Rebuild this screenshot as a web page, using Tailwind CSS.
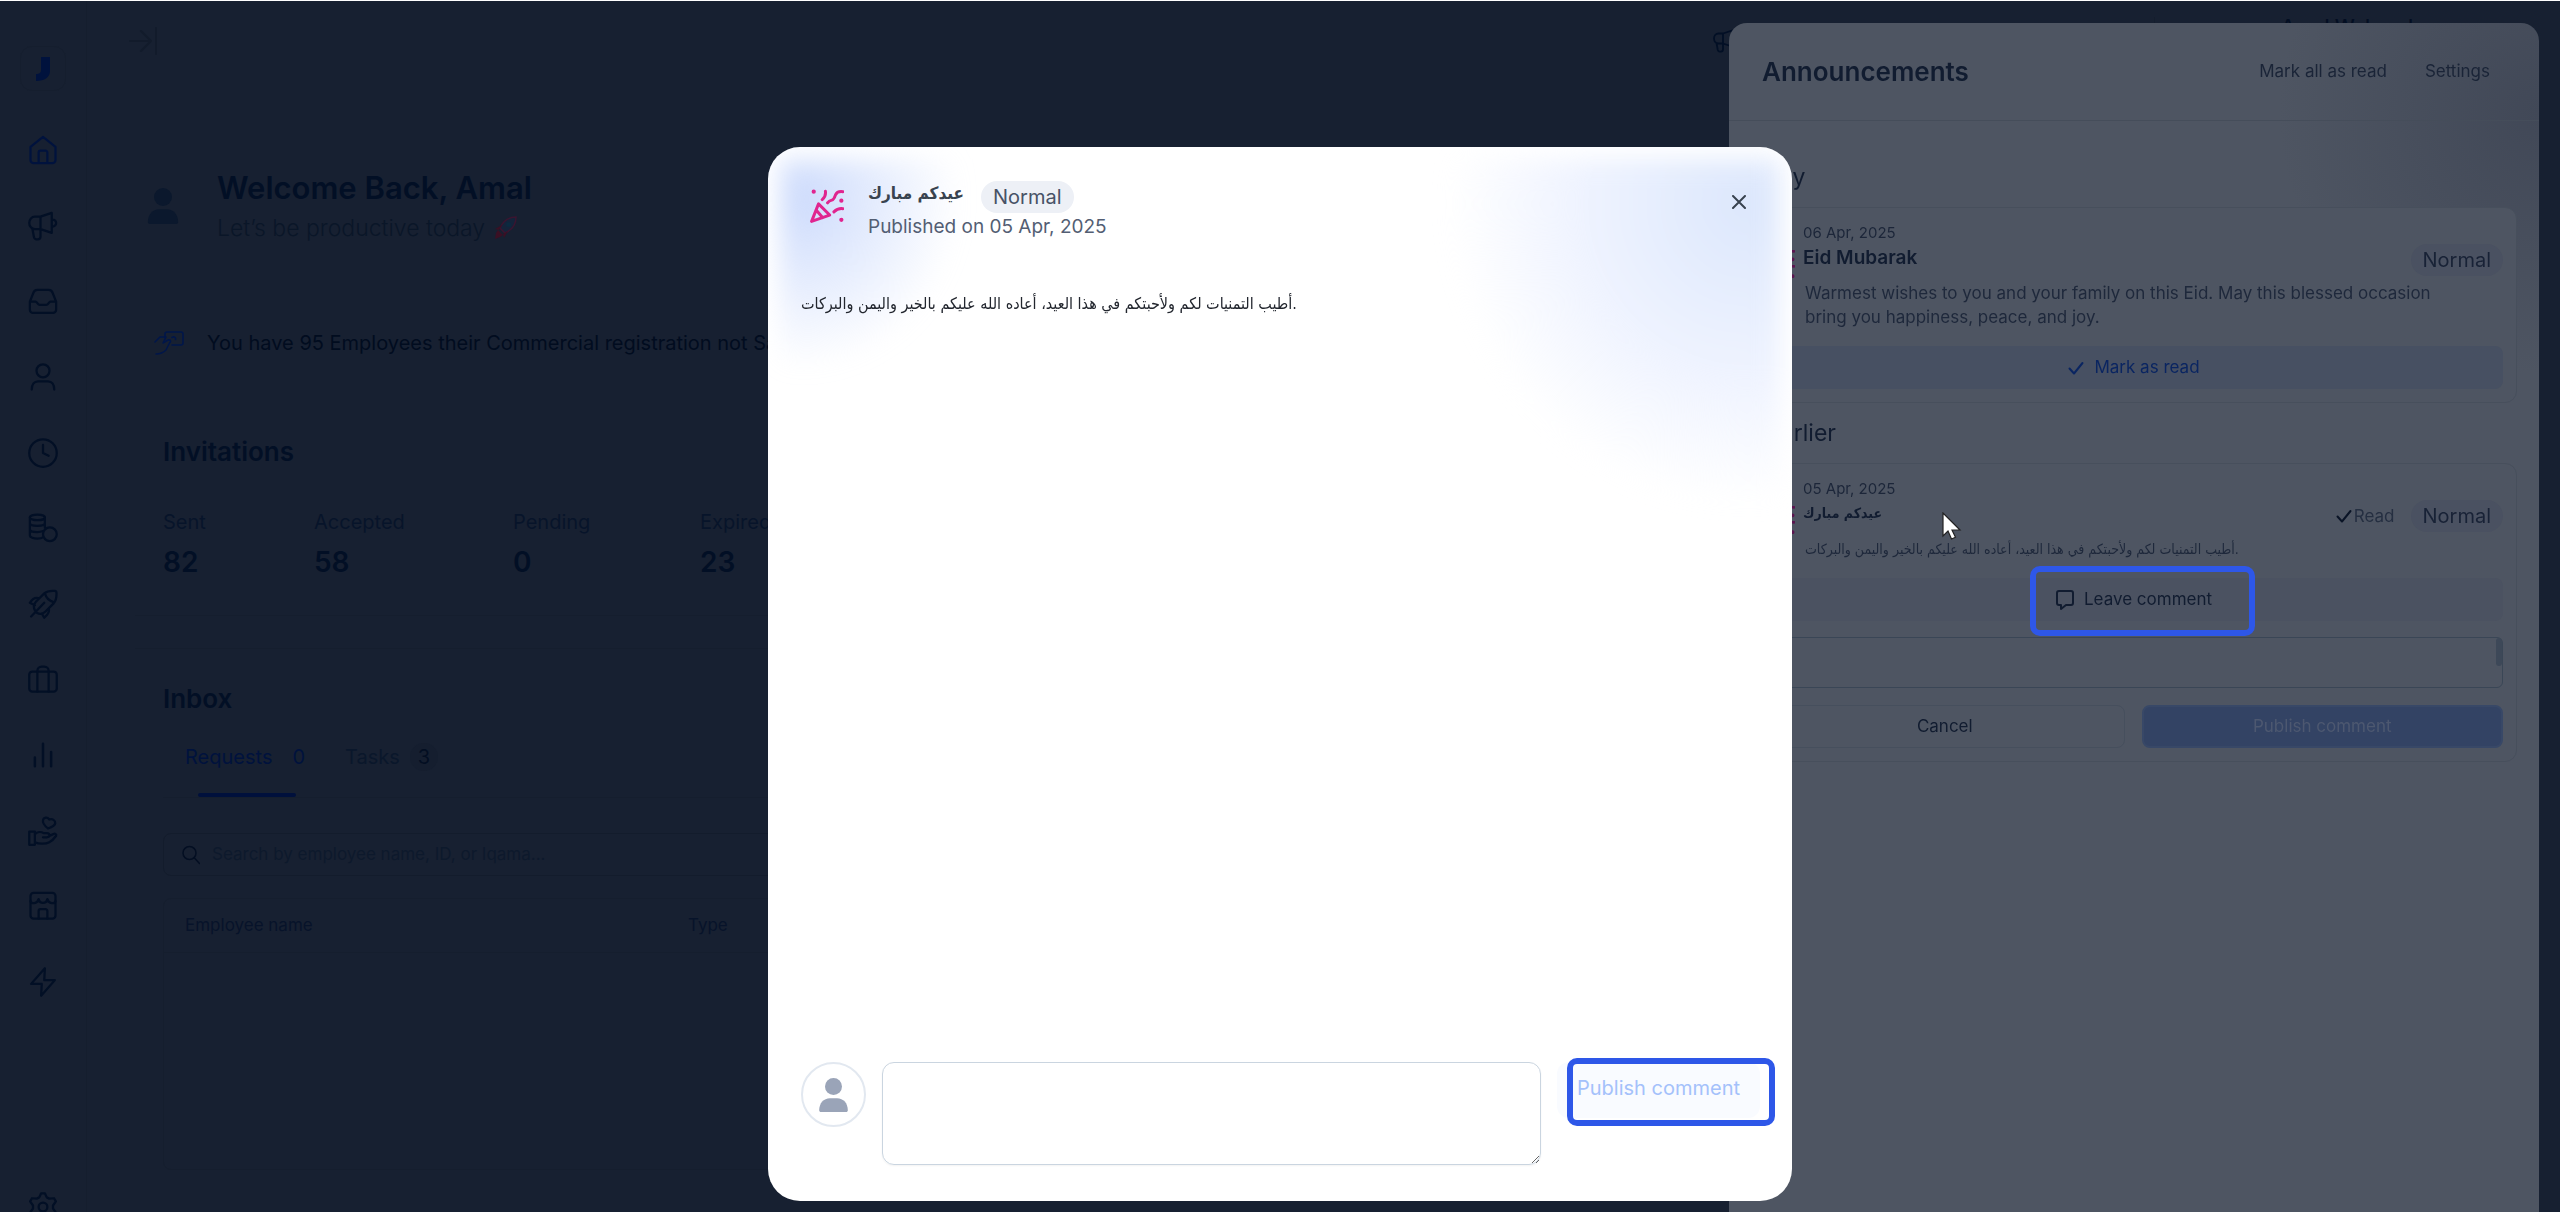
<!DOCTYPE html>
<html lang="en">
  <head>
    <meta charset="UTF-8" />
    <meta name="viewport" content="width=device-width, initial-scale=1.0" />
    <title>Announcements</title>
    <script src="https://cdn.jsdelivr.net/npm/@tailwindcss/browser@4"></script>
  </head>
  <body
    class="flex h-screen overflow-hidden border-t border-white bg-[#172031] font-['Inter','DejaVu_Sans',sans-serif] text-[#030e22]"
  >
    <!-- Shared icons -->
    <svg class="hidden">
      <symbol id="party" viewBox="0 0 32 32" fill="none" stroke="currentColor" stroke-width="2.8" stroke-linecap="round" stroke-linejoin="round">
        <path d="M8 14 1.5 30.5 18.500 24.500ZM6 20l6 7" />
        <path d="M14.500 2c.5 3.500-.5 6-3 8M31 2.500c-4-.5-6 .5-7 3-.8 2.500-1.500 4.500-3.500 5-2 .4-3 1-4 2.500M31 18.500c-3.500-.5-6 .5-8.500 3" />
        <path d="M3.500 2.500h.01M29.500 11h.01M29.500 29h.01" stroke-width="4" />
      </symbol>
      <symbol id="person" viewBox="0 0 32 38" fill="currentColor">
        <circle cx="16" cy="9.500" r="9.500" />
        <path d="M0 36c0-8 5-13.500 12-13.500h8c7 0 12 5.500 12 13.500 0 1.200-.8 2-2 2H2c-1.200 0-2-.8-2-2Z" />
      </symbol>
      <symbol id="megaphone" viewBox="0 0 24 24" fill="none" stroke="currentColor" stroke-width="1.800" stroke-linecap="round" stroke-linejoin="round">
        <path d="M10 4.500H5.500a4.500 5 0 0 0 0 10H10ZM10 4.500 19 1.500v16L10 14.500M19 6.500c2 .5 3.500 1.500 3.500 3s-1.500 2.700-3.500 3.200M3.500 14.200 4.800 21c.3 1 1 1.600 2 1.600h1c1.300 0 2.200-.8 2.200-2v-6" />
      </symbol>
      <symbol id="check" viewBox="0 0 16 16" fill="none" stroke="currentColor" stroke-width="2" stroke-linecap="round" stroke-linejoin="round">
        <path d="m1.500 8.500 4.500 5L14.500 3" />
      </symbol>
    </svg>

    <!-- Sidebar -->
    <aside class="flex w-[87px] shrink-0 flex-col items-center overflow-hidden border-r border-[#151e2e] pt-[45px]">
      <div class="flex h-[45px] w-[46px] shrink-0 items-center justify-center rounded-xl border border-[#151e2e]">
        <svg class="h-6 w-4" viewBox="0 0 16 24" fill="#00123d"><path d="M6 0h9v14c0 6-5 10-14 10v-7c3 0 5-1 5-4Z" /></svg>
      </div>
      <nav class="mt-[37px] flex h-[876px] shrink-0 flex-col justify-between text-[#020f25]">
        <a href="#" aria-label="Home" class="flex size-11 items-center justify-center text-[#00123d]">
          <svg class="size-[30px]" viewBox="0 0 24 24" fill="none" stroke="currentColor" stroke-width="1.800" stroke-linecap="round" stroke-linejoin="round"><path d="M2 9.500 12 1.500l10 8V20a2.500 2.500 0 0 1-2.500 2.500h-15A2.500 2.500 0 0 1 2 20ZM8.500 22.500V14A1.500 1.500 0 0 1 10 12.500h4a1.500 1.500 0 0 1 1.500 1.500v8.500" /></svg>
        </a>
        <a href="#" aria-label="Announcements" class="flex size-11 items-center justify-center">
          <svg class="size-[30px]"><use href="#megaphone" /></svg>
        </a>
        <a href="#" aria-label="Inbox" class="flex size-11 items-center justify-center">
          <svg class="size-[30px]" viewBox="0 0 24 24" fill="none" stroke="currentColor" stroke-width="1.800" stroke-linecap="round" stroke-linejoin="round"><path d="M1.500 12.500 4.500 5c.5-1.300 1.500-2 3-2h9c1.500 0 2.500.7 3 2l3 7.500V19a2.500 2.500 0 0 1-2.500 2.500H4A2.500 2.500 0 0 1 1.500 19ZM1.500 12.500H6c1.500 0 1.500 2.500 3.500 2.500h5c2 0 2-2.500 3.500-2.500h4.500" /></svg>
        </a>
        <a href="#" aria-label="Employees" class="flex size-11 items-center justify-center">
          <svg class="size-[30px]" viewBox="0 0 24 24" fill="none" stroke="currentColor" stroke-width="1.800" stroke-linecap="round" stroke-linejoin="round"><circle cx="12" cy="7" r="5.200" /><path d="M3 22c0-4 2-6.500 5-6.500h8c3 0 5 2.500 5 6.500" /></svg>
        </a>
        <a href="#" aria-label="Attendance" class="flex size-11 items-center justify-center">
          <svg class="size-[30px]" viewBox="0 0 24 24" fill="none" stroke="currentColor" stroke-width="1.800" stroke-linecap="round" stroke-linejoin="round"><circle cx="12" cy="12" r="11" /><path d="M12 5.500V12l4.500 2.200" /></svg>
        </a>
        <a href="#" aria-label="Payroll" class="flex size-11 items-center justify-center">
          <svg class="size-[30px]" viewBox="0 0 24 24" fill="none" stroke="currentColor" stroke-width="1.800" stroke-linecap="round" stroke-linejoin="round"><ellipse cx="7.500" cy="3.500" rx="6" ry="2.200" /><path d="M1.500 3.500v14.500c0 1.500 3 2.500 6 2.500 2 0 3.500-.3 4.500-1M13.500 3.500v8M1.500 8c0 1.500 3 2.200 6 2.200s6-.7 6-2.200M1.500 13c0 1.500 3 2.200 6 2.200 1.500 0 3-.2 4-.6" /><circle cx="17.500" cy="17" r="5.500" /></svg>
        </a>
        <a href="#" aria-label="Onboarding" class="flex size-11 items-center justify-center">
          <svg class="size-[30px]" viewBox="0 0 24 24" fill="none" stroke="currentColor" stroke-width="1.800" stroke-linecap="round" stroke-linejoin="round"><path d="M5.500 17c-1.500-3-1-5 1-7l6.500-6.500c2.500-2 5.500-2.300 8.500-2 1 .1 1.300.8 1.300 1.700.1 3-.3 6-2.300 8.300L14 18c-2 2-4.500 2.500-7 1M13.500 3.500c1 3.500 3.500 6 7 7M13 11 2.500 22M9 7.500C6.500 6.500 3.500 8 1.500 11l4 2M16.500 15.500c1 2.500-.5 5-3.500 7.500l-2-3.500" /></svg>
        </a>
        <a href="#" aria-label="Jobs" class="flex size-11 items-center justify-center">
          <svg class="size-[30px]" viewBox="0 0 24 24" fill="none" stroke="currentColor" stroke-width="1.800" stroke-linecap="round" stroke-linejoin="round"><rect x="1" y="6" width="22" height="16" rx="2.500" /><path d="M7.500 22V5.500A3.500 3.500 0 0 1 11 2h2a3.500 3.500 0 0 1 3.500 3.500V22" /></svg>
        </a>
        <a href="#" aria-label="Reports" class="flex size-11 items-center justify-center">
          <svg class="size-[30px]" viewBox="0 0 24 24" fill="none" stroke="currentColor" stroke-width="2" stroke-linecap="round"><path d="M5.500 14v7M12 3v18M18.500 9.500V21" /></svg>
        </a>
        <a href="#" aria-label="Benefits" class="flex size-11 items-center justify-center">
          <svg class="size-[30px]" viewBox="0 0 24 24" fill="none" stroke="currentColor" stroke-width="1.800" stroke-linecap="round" stroke-linejoin="round"><path d="M1 12.500h4.500V23H1ZM5.500 14.500c2-2 5-2 7-.8h2.500c3 .3 3 3.300 0 3.300h-3M5.500 21c3 1.500 9 1.500 11.500 0 2-1 4-3 5.500-5.200.5-1.500-1-2-2.300-1.300L17 16M16 10c-3-2.500-4.500-4.500-4-6.500.5-2.500 3.500-3 5-.7 2.500-1 5 .7 4.800 3C21.500 8 19 9 16 10Z" /></svg>
        </a>
        <a href="#" aria-label="Marketplace" class="flex size-11 items-center justify-center">
          <svg class="size-[30px]" viewBox="0 0 24 24" fill="none" stroke="currentColor" stroke-width="1.800" stroke-linecap="round" stroke-linejoin="round"><rect x="2" y="1.500" width="20" height="20.500" rx="2.500" /><path d="M2 8c.5 2.500 5.500 2.500 6.500-1.500 1 4 6 4 7 0 1 4 6 4 6.500 1.500M8.500 22v-6a1.500 1.500 0 0 1 1.500-1.500h4a1.500 1.500 0 0 1 1.500 1.500v6" /></svg>
        </a>
        <a href="#" aria-label="Automations" class="flex size-11 items-center justify-center">
          <svg class="size-[30px]" viewBox="0 0 24 24" fill="none" stroke="currentColor" stroke-width="1.800" stroke-linecap="round" stroke-linejoin="round"><path d="M13.500 1 2.500 13.500H11L10.500 23l11-12.500H13Z" /></svg>
        </a>
      </nav>
      <a href="#" aria-label="Settings" class="mt-[188px] shrink-0 text-[#020f25]">
        <svg class="size-[30px]" viewBox="0 0 24 24" fill="none" stroke="currentColor" stroke-width="1.800" stroke-linejoin="round"><circle cx="12" cy="12" r="3.500" /><path d="M10.500 1h3l1.500 3.300 2 1 3.800-.3 1.500 2.500L20 10.800v2.400l2.300 3.300-1.500 2.500-3.800-.3-2 1L13.500 23h-3L9 19.700l-2-1-3.800.3-1.500-2.500L4 13.200v-2.400L1.700 7.500 3.200 5l3.800.3 2-1Z" /></svg>
      </a>
    </aside>

    <!-- Dashboard -->
    <main class="flex-1">
      <header class="flex h-20 items-center pr-[147px] pl-[42px]">
        <button type="button" aria-label="Toggle menu" class="text-[#121b2b]">
          <svg class="h-7 w-7" viewBox="0 0 28 28" fill="none" stroke="currentColor" stroke-width="2" stroke-linecap="round" stroke-linejoin="round"><path d="M1 14h21M12 4l10 10-10 10M27 1v26" /></svg>
        </button>
        <svg class="mr-[417px] ml-auto size-6 text-[#020f25]"><use href="#megaphone" /></svg>
        <span class="mr-[126px] h-12 w-px bg-[#141d2d]"></span>
        <span class="mb-7 text-xl leading-6 font-medium">Amal Waheed</span>
      </header>

      <section class="mt-[87px] flex items-center gap-[38px] pl-[60px]">
        <svg class="h-9 w-8 text-[#0b182d]"><use href="#person" /></svg>
        <div>
          <h1 class="text-[31px] leading-10 font-semibold text-[#020f25]">Welcome Back, Amal</h1>
          <p class="mt-1 flex items-center gap-2 text-[23px] leading-8 font-light text-[#0a1628]">
            Let’s be productive today
            <svg class="size-6" viewBox="0 0 24 24"><path d="M7 12C10 5 16 1 23 1c0 7-4 13-11 16Z" fill="#14233a" stroke="#3a1530" stroke-width="1.500" /><circle cx="15.500" cy="8.500" r="2.500" fill="#0b2a40" /><path d="M9 9 2 13l4 1ZM15 15l-4 7-1-4ZM5 14l5 5-3 2-5 2 1-6Z" fill="#3a1024" /></svg>
          </p>
        </div>
      </section>

      <p class="mt-[85px] flex items-center gap-[23px] pl-[67px] text-[20px] leading-7 text-[#010c1f]">
        <svg class="h-6 w-[30px] text-[#00164a]" viewBox="0 0 30 24" fill="none" stroke="currentColor" stroke-width="1.600" stroke-linecap="round" stroke-linejoin="round"><path d="M11 7V3a2 2 0 0 1 2-2h14a2 2 0 0 1 2 2v9a2 2 0 0 1-2 2h-9M1 11l5-5h6l-3 6 5-3c3-.5 3 1.500 1.500 3L12 19c-3 3-6 4-10 4M18 6.500c2-1.500 4 0 3.500 2" /></svg>
        You have 95 Employees their Commercial registration not Saved
      </p>

      <section class="mt-[60px] ml-12 w-3/5 border-b border-[#151e2e] px-7 pt-[19px] pb-[35px]">
        <h2 class="text-[26px] leading-8 font-semibold text-[#020f25]">Invitations</h2>
        <dl class="mt-10 grid grid-cols-[151px_199px_187px_auto] text-[20px] leading-7 text-[#07142a]">
          <div><dt>Sent</dt><dd class="mt-2 text-[28px] leading-9 font-semibold text-[#020f25]">82</dd></div>
          <div><dt>Accepted</dt><dd class="mt-2 text-[28px] leading-9 font-semibold text-[#020f25]">58</dd></div>
          <div><dt>Pending</dt><dd class="mt-2 text-[28px] leading-9 font-semibold text-[#020f25]">0</dd></div>
          <div><dt>Expired</dt><dd class="mt-2 text-[28px] leading-9 font-semibold text-[#020f25]">23</dd></div>
        </dl>
      </section>

      <section class="mt-8 ml-12 w-3/5 border-t border-[#151e2e] px-7 pt-[34px]">
        <h2 class="text-[26px] leading-8 font-semibold text-[#020f25]">Inbox</h2>
        <div class="mt-7 flex gap-9 border-b border-[#151e2e] pl-[22px] text-[20px] leading-7">
          <button type="button" class="flex flex-col items-center text-[#00123d]">
            <span class="flex gap-4">Requests <span class="px-1">0</span></span>
            <span class="mt-[22px] h-1 w-[98px] rounded-full bg-[#00103c]"></span>
          </button>
          <button type="button" class="flex items-start gap-2.5 text-[#0a172b]">
            Tasks <span class="flex size-7 items-center justify-center rounded-full bg-[#151e2f] text-[#030e22]">3</span>
          </button>
        </div>
        <label class="mt-[35px] flex h-[43px] items-center gap-3 rounded-lg border border-[#131c2c] px-[18px]">
          <svg class="h-5 w-[18px]" viewBox="0 0 18 20" fill="none" stroke="currentColor" stroke-width="1.500" stroke-linecap="round"><circle cx="7.500" cy="8" r="6.500" /><path d="m12.500 13 5 5.500" /></svg>
          <input type="text" aria-label="Search" placeholder="Search by employee name, ID, or Iqama..." class="flex-1 text-[17px] placeholder:text-[#0d192c]" />
        </label>
        <div class="mt-[22px] h-[272px] rounded-lg border border-[#151e2e]">
          <table class="w-full text-left text-[17px] leading-[53px] text-[#07132a]">
            <thead>
              <tr class="border-b border-[#151e2e]">
                <th class="w-[524px] pl-[21px] font-normal">Employee name</th>
                <th class="font-normal">Type</th>
              </tr>
            </thead>
          </table>
        </div>
      </section>
    </main>

    <!-- Announcements drawer -->
    <aside
      class="fixed top-[23px] right-[21px] bottom-0 w-[810px] rounded-t-[18px] bg-[#4e5562] bg-[radial-gradient(circle_260px_at_100%_90px,#414857,#4e556200)] text-[#111c30]"
    >
      <header class="flex h-[98px] items-center border-b border-[#454d5a] pr-[49px] pl-[33px]">
        <h2 class="flex-1 text-[26px] font-semibold">Announcements</h2>
        <button type="button" class="mr-[38px] text-[17px] text-[#1a2437]">Mark all as read</button>
        <button type="button" class="text-[17px] text-[#1a2437]">Settings</button>
      </header>
      <div class="px-[22px] pt-10">
        <h3 class="-ml-3 text-[23px] leading-8">Today</h3>
        <article class="mt-[14px] rounded-xl border border-[#474f5c] bg-[#4e5562] p-[13px]">
          <div class="flex h-[50px] items-start gap-2">
            <svg class="mt-7 size-[30px] text-[#5b1650]"><use href="#party" /></svg>
            <div class="flex-1">
              <time class="block text-[15px] leading-6 text-[#1c2639]">06 Apr, 2025</time>
              <h4 class="text-[19px] leading-[26px] font-semibold">Eid Mubarak</h4>
            </div>
            <span class="mt-[23px] rounded-full bg-[#4a5161] px-3 text-[20px] leading-8 text-[#182236]">Normal</span>
          </div>
          <p class="mt-2.5 max-w-[690px] pl-10 text-[17px] leading-6 text-[#1e283b]">
            Warmest wishes to you and your family on this Eid. May this blessed occasion bring you happiness, peace, and joy.
          </p>
          <button type="button" class="mt-[17px] flex h-[43px] w-full items-center justify-center gap-2.5 rounded-lg bg-[#475062] text-[17px] text-[#0a2561]">
            <svg class="size-4"><use href="#check" /></svg>
            Mark as read
          </button>
        </article>

        <h3 class="mt-[14px] pl-4 text-[23px] leading-8">Earlier</h3>
        <article class="mt-[14px] rounded-xl border border-[#474f5c] bg-[#4e5562] p-[13px]">
          <div class="flex h-[50px] items-start gap-2">
            <svg class="mt-7 size-[30px] text-[#5b1650]"><use href="#party" /></svg>
            <div class="flex-1">
              <time class="block text-[15px] leading-6 text-[#1c2639]">05 Apr, 2025</time>
              <h4 class="font-['DejaVu_Sans_Condensed','DejaVu_Sans'] text-[14px] leading-6 font-bold">عيدكم مبارك</h4>
            </div>
            <span class="mt-[23px] flex items-center gap-0.5 pr-2 text-[17px] leading-8 text-[#252f41]">
              <svg class="size-4 text-[#0a1426]"><use href="#check" /></svg>Read
            </span>
            <span class="mt-[23px] rounded-full bg-[#4a5161] px-3 text-[20px] leading-8 text-[#182236]">Normal</span>
          </div>
          <p class="mt-2.5 pl-10 font-['DejaVu_Sans_Condensed','DejaVu_Sans'] text-[14px] leading-6 text-[#1e283b]">أطيب التمنيات لكم ولأحبتكم في هذا العيد، أعاده الله عليكم بالخير واليمن والبركات.</p>
          <div class="relative mt-[17px]">
            <button type="button" class="flex h-[43px] w-full items-center justify-center gap-2.5 rounded-lg bg-[#4b5261] text-[17px]">
              <svg class="h-5 w-[18px]" viewBox="0 0 18 20" fill="none" stroke="currentColor" stroke-width="2" stroke-linejoin="round"><path d="M3 1h12a2 2 0 0 1 2 2v10a2 2 0 0 1-2 2h-5l-5 4v-4H3a2 2 0 0 1-2-2V3a2 2 0 0 1 2-2Z" /></svg>
              Leave comment
            </button>
            <div class="absolute -top-3 left-[265px] h-[70px] w-[225px] rounded-[10px] border-[6px] border-[#2e57e8]"></div>
          </div>
          <div class="relative mt-4">
            <textarea aria-label="Comment" class="block h-[51px] w-full resize-none rounded-md border border-[#3a4656]"></textarea>
            <span class="absolute top-px right-px h-7 w-1.5 rounded-full bg-[#3d4858]"></span>
          </div>
          <div class="mt-[17px] flex gap-[17px]">
            <button type="button" class="h-[43px] flex-1 rounded-lg border border-[#464f5d] text-[17px]">Cancel</button>
            <button type="button" class="h-[43px] flex-1 rounded-lg border-2 border-[#384867] bg-[#334364] text-[17px] text-[#4d5870]">Publish comment</button>
          </div>
        </article>
      </div>
    </aside>

    <!-- Announcement dialog -->
    <div
      role="dialog"
      class="fixed bottom-[11px] left-1/2 flex h-[87vh] w-2/5 -translate-x-1/2 flex-col overflow-hidden rounded-[32px] bg-white text-[#39434f]"
    >
      <div class="absolute inset-x-3 top-3 h-[400px] bg-[radial-gradient(ellipse_160px_170px_at_20px_40px,#cddbfc,#ffffff00),radial-gradient(circle_300px_at_97%_45px,#dce7fc,#f0f4ff_60%,#ffffff00)] blur-[12px]"></div>
      <header class="relative flex items-start pt-[30px] pr-[38px] pl-[42px]">
        <svg class="mt-3 size-[34px] text-[#e0258f]"><use href="#party" /></svg>
        <div class="ml-6 flex-1">
          <div class="flex items-start gap-[17px]">
            <h2 class="font-['DejaVu_Sans_Condensed','DejaVu_Sans'] text-[17px] leading-8 font-bold">عيدكم مبارك</h2>
            <span class="mt-1 rounded-full bg-[#edf0f6] px-3 text-[20px] leading-8 text-[#475266]">Normal</span>
          </div>
          <p class="text-[19px] leading-7 text-[#535e73]">Published on 05 Apr, 2025</p>
        </div>
        <button type="button" aria-label="Close" class="mt-[10px] p-2 text-[#39434f]">
          <svg class="size-3.5" viewBox="0 0 14 14" fill="none" stroke="currentColor" stroke-width="2" stroke-linecap="round"><path d="m1 1 12 12M13 1 1 13" /></svg>
        </button>
      </header>
      <p class="relative mt-[51px] flex-1 px-[33px] font-['DejaVu_Sans_Condensed','DejaVu_Sans'] text-[16px] leading-6 text-[#22262e]">أطيب التمنيات لكم ولأحبتكم في هذا العيد، أعاده الله عليكم بالخير واليمن والبركات.</p>
      <form class="flex items-start pr-8 pb-9 pl-[33px]">
        <div class="mr-4 flex size-[65px] items-center justify-center rounded-full border-2 border-[#e2e8f0]">
          <svg class="h-[34px] w-[29px] text-[#9aa4b8]"><use href="#person" /></svg>
        </div>
        <textarea aria-label="Write a comment" class="h-[103px] flex-1 resize rounded-xl border border-[#cad5e0] shadow-xs"></textarea>
        <div class="relative ml-4">
          <button type="button" class="h-14 w-[203px] rounded-xl bg-[#f9fbff] pb-1 text-[20px] text-[#a4c1fb]">Publish comment</button>
          <div class="absolute -top-1 left-2.5 h-[68px] w-[208px] rounded-[10px] border-[6px] border-[#2e57e8]"></div>
        </div>
      </form>
    </div>

    <!-- Pointer -->
    <svg class="absolute top-[512px] left-[1942px] h-[29px] w-5" viewBox="0 0 20 29" fill="#fff" stroke="#222" stroke-width="1.200"><path d="M1 1v23l5-5 3.500 8 4-1.700L10 18h8Z" /></svg>
  </body>
</html>
